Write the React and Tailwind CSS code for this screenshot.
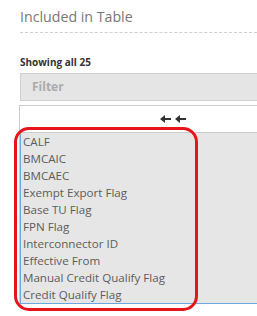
import React from "react";

const items = [
  "CALF",
  "BMCAIC",
  "BMCAEC",
  "Exempt Export Flag",
  "Base TU Flag",
  "FPN Flag",
  "Interconnector ID",
  "Effective From",
  "Manual Credit Qualify Flag",
  "Credit Qualify Flag",
];

function Arrows() {
  return (
    <svg width="28" height="8" viewBox="0 0 28 8" className="block">
      <path d="M0 4 L5 0 L5 3 L11 3 L11 5 L5 5 L5 8 Z" fill="#333" />
      <path d="M15 4 L20 0 L20 3 L26 3 L26 5 L20 5 L20 8 Z" fill="#333" />
    </svg>
  );
}

export default function App() {
  return (
    <div
      className="relative w-[257px] h-[316px] overflow-hidden bg-white"
      style={{ fontFamily: '"Open Sans", sans-serif' }}
    >
      <div className="pl-5">
        <div className="pt-[7px] pb-[5px] border-b border-dashed border-[#cfcfcf] text-[14.2px] leading-[20px] text-[#777]">
          Included in Table
        </div>
        <div className="mt-[22px] text-[10px] leading-[14px] font-bold text-[#333]">
          Showing all 25
        </div>
        <div className="mt-[4px] h-[28px] bg-[#e5e5e5] border border-r-0 border-[#d0d0d0] pl-[11px] flex items-center text-[12px] font-bold text-[#aaa]">
          Filter
        </div>
      </div>
      <div className="ml-[19px] mt-[4px] bg-white border border-r-0 border-b-0 border-[#cccccc]">
        <div className="h-[27px] border-b border-[#cccccc] flex items-center pl-[140px]">
          <Arrows />
        </div>
        <div className="bg-[#e6e6e6] border-l border-b border-[#6aa8e0] pl-[2px]">
          {items.map((t) => (
            <div key={t} className="text-[11.6px] leading-[17px] text-[#5c5c5c] whitespace-nowrap">
              {t}
            </div>
          ))}
        </div>
      </div>
      <div className="absolute left-[14px] top-[127px] w-[184px] h-[184px] border-[3px] border-[#e8141c] rounded-[15px]" />
    </div>
  );
}
